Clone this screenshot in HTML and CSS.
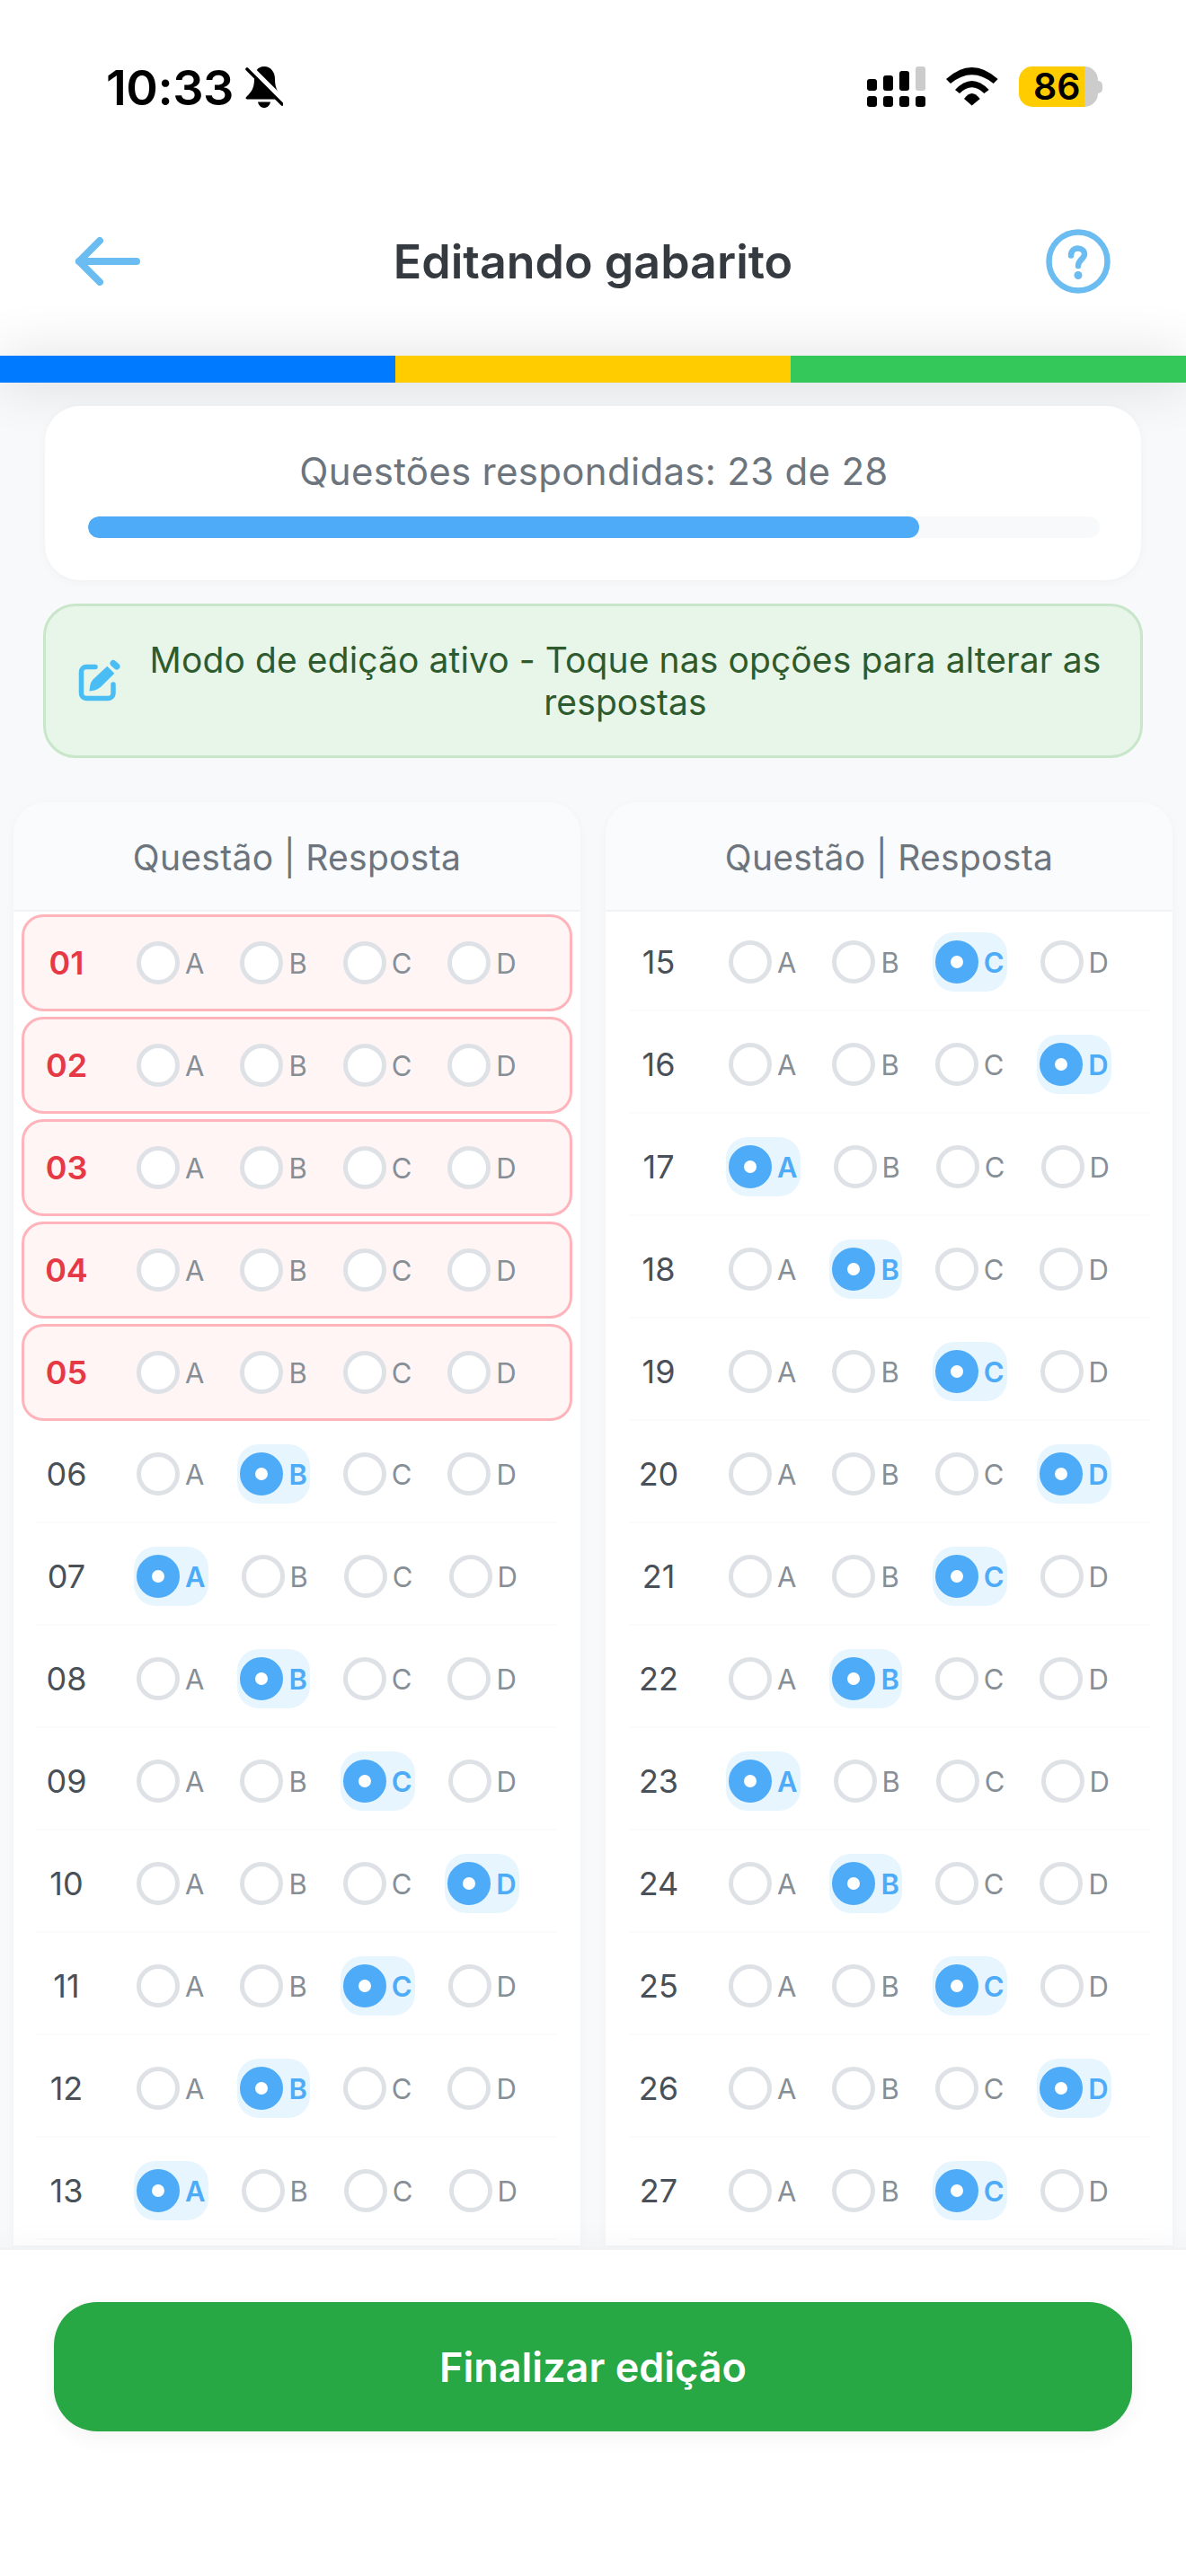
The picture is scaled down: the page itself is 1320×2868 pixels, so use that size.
FILE: index.html
```html
<!DOCTYPE html>
<html lang="pt-BR">
<head>
    <meta charset="UTF-8">
    <meta name="viewport" content="width=device-width, initial-scale=1.0">
    <title>Editando gabarito</title>
    <link rel="stylesheet" href="styles.css">
</head>
<body>

<div class="status">
    <div class="status-left">
        <span class="time">10:33</span>
        <svg class="bell" viewBox="0 0 42 46" width="42" height="46">
            <path fill="#000" d="M21 0C13 0 10 7 10 14C10 24 7 28 2 33C0 35 0 36 2 36.5H40C42 36 41 34 40 33C36 28 33 24 33 14C33 7 29 0 21 0Z"/>
            <path fill="#000" d="M14 39.5H28C27 44 24 46 21 46C18 46 15 44 14 39.5Z"/>
            <path stroke="#fff" stroke-width="8" d="M4 1L44 41"/>
            <path stroke="#000" stroke-width="3.6" stroke-linecap="round" d="M2 3L41 42"/>
        </svg>
    </div>
    <div class="status-right">
        <svg class="signal" viewBox="0 0 65 45" width="65" height="45">
            <rect x="54" y="0" width="11" height="27" rx="3" fill="#ccc"/>
            <rect x="36" y="5" width="11" height="22" rx="3"/>
            <rect x="18" y="10" width="11" height="17" rx="3"/>
            <rect x="0" y="14" width="11" height="13" rx="3"/>
            <rect x="0" y="33" width="11" height="12" rx="3"/>
            <rect x="18" y="33" width="11" height="12" rx="3"/>
            <rect x="36" y="33" width="11" height="12" rx="3"/>
            <rect x="54" y="33" width="11" height="12" rx="3"/>
        </svg>
        <svg class="wifi" viewBox="0 0 58 43" width="58" height="43">
            <path d="M0 13Q28.7 -13 57.6 13L52.7 18Q28.7 -1.500 5 18Z"/>
            <path d="M10 25Q28.7 5 47.7 25L42.3 29Q28.700 15.500 15 29Z"/>
            <path d="M20 35Q28.7 23 37.700 35L28.700 42.500Z"/>
        </svg>
        <div class="battery-wrap">
            <div class="battery">86</div>
            <div class="battery-nub"></div>
        </div>
    </div>
</div>

<div class="nav">
    <svg class="nav-icon" viewBox="0 0 72 54" width="72" height="54" fill="none" stroke="#6bbcf0" stroke-width="8" stroke-linecap="round" stroke-linejoin="round">
        <path d="M68 27H4"/>
        <path d="M27 4L4 27L27 50"/>
    </svg>
    <h1 class="nav-title">Editando gabarito</h1>
    <svg class="nav-icon" viewBox="0 0 72 72" width="72" height="72" fill="none" stroke="#6bbcf0" stroke-width="6.500" stroke-linecap="round">
        <circle cx="36" cy="36" r="32.500"/>
        <path d="M28 29.500C28 24.500 31.500 21.500 35.500 21.500C40 21.500 43 24.500 43 28C43 33 36 34 36 41"/>
        <circle cx="36" cy="51.500" r="4.500" fill="#6bbcf0" stroke="none"/>
    </svg>
</div>

<div class="color-bar">
    <div class="color-blue"></div>
    <div class="color-yellow"></div>
    <div class="color-green"></div>
</div>

<div class="content">
    <div class="progress-card">
        <div class="progress-label">Questões respondidas: 23 de 28</div>
        <div class="progress-track"><div class="progress-fill" style="width: 82.14%"></div></div>
    </div>

    <div class="edit-banner">
        <svg class="edit-icon" viewBox="0 0 48 48" width="48" height="48">
            <path fill="none" stroke="#4abdf5" stroke-width="5.500" stroke-linecap="round" d="M19 8.500H9A5.500 5.500 0 0 0 3.500 14V38A5.500 5.500 0 0 0 9 43.500H33.500A5.500 5.500 0 0 0 39 38V28"/>
            <path fill="#4abdf5" d="M12.500 35.500Q13 26 16.500 22.500L32.300 7.700L40.300 15.700L25 31Q20 35 12.500 35.500Z"/>
            <path stroke="#4abdf5" stroke-width="7" stroke-linecap="round" d="M39 4.500L43 8"/>
        </svg>
        <div class="edit-text">Modo de edição ativo - Toque nas opções para alterar as respostas</div>
    </div>

    <div class="columns">
        <div class="column">
            <div class="column-head">Questão | Resposta</div>
            <div class="row missing"><span class="num">01</span><div class="opts"><div class="opt"><span class="radio"></span>A</div><div class="opt"><span class="radio"></span>B</div><div class="opt"><span class="radio"></span>C</div><div class="opt"><span class="radio"></span>D</div></div></div>
            <div class="row missing"><span class="num">02</span><div class="opts"><div class="opt"><span class="radio"></span>A</div><div class="opt"><span class="radio"></span>B</div><div class="opt"><span class="radio"></span>C</div><div class="opt"><span class="radio"></span>D</div></div></div>
            <div class="row missing"><span class="num">03</span><div class="opts"><div class="opt"><span class="radio"></span>A</div><div class="opt"><span class="radio"></span>B</div><div class="opt"><span class="radio"></span>C</div><div class="opt"><span class="radio"></span>D</div></div></div>
            <div class="row missing"><span class="num">04</span><div class="opts"><div class="opt"><span class="radio"></span>A</div><div class="opt"><span class="radio"></span>B</div><div class="opt"><span class="radio"></span>C</div><div class="opt"><span class="radio"></span>D</div></div></div>
            <div class="row missing"><span class="num">05</span><div class="opts"><div class="opt"><span class="radio"></span>A</div><div class="opt"><span class="radio"></span>B</div><div class="opt"><span class="radio"></span>C</div><div class="opt"><span class="radio"></span>D</div></div></div>
            <div class="row"><span class="num">06</span><div class="opts"><div class="opt"><span class="radio"></span>A</div><div class="opt selected"><span class="radio"></span>B</div><div class="opt"><span class="radio"></span>C</div><div class="opt"><span class="radio"></span>D</div></div></div>
            <div class="row"><span class="num">07</span><div class="opts"><div class="opt selected"><span class="radio"></span>A</div><div class="opt"><span class="radio"></span>B</div><div class="opt"><span class="radio"></span>C</div><div class="opt"><span class="radio"></span>D</div></div></div>
            <div class="row"><span class="num">08</span><div class="opts"><div class="opt"><span class="radio"></span>A</div><div class="opt selected"><span class="radio"></span>B</div><div class="opt"><span class="radio"></span>C</div><div class="opt"><span class="radio"></span>D</div></div></div>
            <div class="row"><span class="num">09</span><div class="opts"><div class="opt"><span class="radio"></span>A</div><div class="opt"><span class="radio"></span>B</div><div class="opt selected"><span class="radio"></span>C</div><div class="opt"><span class="radio"></span>D</div></div></div>
            <div class="row"><span class="num">10</span><div class="opts"><div class="opt"><span class="radio"></span>A</div><div class="opt"><span class="radio"></span>B</div><div class="opt"><span class="radio"></span>C</div><div class="opt selected"><span class="radio"></span>D</div></div></div>
            <div class="row"><span class="num">11</span><div class="opts"><div class="opt"><span class="radio"></span>A</div><div class="opt"><span class="radio"></span>B</div><div class="opt selected"><span class="radio"></span>C</div><div class="opt"><span class="radio"></span>D</div></div></div>
            <div class="row"><span class="num">12</span><div class="opts"><div class="opt"><span class="radio"></span>A</div><div class="opt selected"><span class="radio"></span>B</div><div class="opt"><span class="radio"></span>C</div><div class="opt"><span class="radio"></span>D</div></div></div>
            <div class="row"><span class="num">13</span><div class="opts"><div class="opt selected"><span class="radio"></span>A</div><div class="opt"><span class="radio"></span>B</div><div class="opt"><span class="radio"></span>C</div><div class="opt"><span class="radio"></span>D</div></div></div>
        </div>

        <div class="column">
            <div class="column-head">Questão | Resposta</div>
            <div class="row"><span class="num">15</span><div class="opts"><div class="opt"><span class="radio"></span>A</div><div class="opt"><span class="radio"></span>B</div><div class="opt selected"><span class="radio"></span>C</div><div class="opt"><span class="radio"></span>D</div></div></div>
            <div class="row"><span class="num">16</span><div class="opts"><div class="opt"><span class="radio"></span>A</div><div class="opt"><span class="radio"></span>B</div><div class="opt"><span class="radio"></span>C</div><div class="opt selected"><span class="radio"></span>D</div></div></div>
            <div class="row"><span class="num">17</span><div class="opts"><div class="opt selected"><span class="radio"></span>A</div><div class="opt"><span class="radio"></span>B</div><div class="opt"><span class="radio"></span>C</div><div class="opt"><span class="radio"></span>D</div></div></div>
            <div class="row"><span class="num">18</span><div class="opts"><div class="opt"><span class="radio"></span>A</div><div class="opt selected"><span class="radio"></span>B</div><div class="opt"><span class="radio"></span>C</div><div class="opt"><span class="radio"></span>D</div></div></div>
            <div class="row"><span class="num">19</span><div class="opts"><div class="opt"><span class="radio"></span>A</div><div class="opt"><span class="radio"></span>B</div><div class="opt selected"><span class="radio"></span>C</div><div class="opt"><span class="radio"></span>D</div></div></div>
            <div class="row"><span class="num">20</span><div class="opts"><div class="opt"><span class="radio"></span>A</div><div class="opt"><span class="radio"></span>B</div><div class="opt"><span class="radio"></span>C</div><div class="opt selected"><span class="radio"></span>D</div></div></div>
            <div class="row"><span class="num">21</span><div class="opts"><div class="opt"><span class="radio"></span>A</div><div class="opt"><span class="radio"></span>B</div><div class="opt selected"><span class="radio"></span>C</div><div class="opt"><span class="radio"></span>D</div></div></div>
            <div class="row"><span class="num">22</span><div class="opts"><div class="opt"><span class="radio"></span>A</div><div class="opt selected"><span class="radio"></span>B</div><div class="opt"><span class="radio"></span>C</div><div class="opt"><span class="radio"></span>D</div></div></div>
            <div class="row"><span class="num">23</span><div class="opts"><div class="opt selected"><span class="radio"></span>A</div><div class="opt"><span class="radio"></span>B</div><div class="opt"><span class="radio"></span>C</div><div class="opt"><span class="radio"></span>D</div></div></div>
            <div class="row"><span class="num">24</span><div class="opts"><div class="opt"><span class="radio"></span>A</div><div class="opt selected"><span class="radio"></span>B</div><div class="opt"><span class="radio"></span>C</div><div class="opt"><span class="radio"></span>D</div></div></div>
            <div class="row"><span class="num">25</span><div class="opts"><div class="opt"><span class="radio"></span>A</div><div class="opt"><span class="radio"></span>B</div><div class="opt selected"><span class="radio"></span>C</div><div class="opt"><span class="radio"></span>D</div></div></div>
            <div class="row"><span class="num">26</span><div class="opts"><div class="opt"><span class="radio"></span>A</div><div class="opt"><span class="radio"></span>B</div><div class="opt"><span class="radio"></span>C</div><div class="opt selected"><span class="radio"></span>D</div></div></div>
            <div class="row"><span class="num">27</span><div class="opts"><div class="opt"><span class="radio"></span>A</div><div class="opt"><span class="radio"></span>B</div><div class="opt selected"><span class="radio"></span>C</div><div class="opt"><span class="radio"></span>D</div></div></div>
        </div>
    </div>
</div>

<div class="footer">
    <button class="finish-button">Finalizar edição</button>
</div>

</body>
</html>
```

FILE: styles.css
```css
* {
    box-sizing: border-box;
}
body {
    font-family: Inter, "Liberation Sans", sans-serif;
    background-color: #f8f9fa;
    margin: 0;
    height: 2868px;
    display: flex;
    flex-direction: column;
    overflow: hidden;
}

/* status bar */
.status {
    height: 186px;
    flex-shrink: 0;
    background: #fff;
    display: flex;
    justify-content: space-between;
    align-items: flex-start;
    padding: 74px 93px 0 118px;
}
.status-left {
    display: flex;
    align-items: center;
    gap: 13px;
    height: 46px;
}
.time {
    font-size: 54px;
    font-weight: 600;
    letter-spacing: -0.5px;
    color: #000;
}
.status-right {
    display: flex;
    align-items: flex-start;
    gap: 23px;
}
.wifi {
    margin-top: 1px;
}
.battery-wrap {
    display: flex;
    align-items: center;
}
.battery {
    width: 88px;
    height: 45px;
    border-radius: 15px;
    background: linear-gradient(to right, #ffcc00 83%, #cccccc 83%);
    font-size: 41px;
    font-weight: 600;
    line-height: 45px;
    color: #000;
    padding-left: 16px;
}
.battery-nub {
    width: 5px;
    height: 14px;
    background: #ccc;
    border-radius: 0 5px 5px 0;
}

/* nav */
.nav {
    height: 210px;
    flex-shrink: 0;
    background: #fff;
    display: flex;
    justify-content: space-between;
    align-items: center;
    padding: 0 84px;
}
.nav-title {
    margin: 0;
    font-size: 52px;
    font-weight: 600;
    color: #343a40;
}
.color-bar {
    height: 30px;
    flex-shrink: 0;
    display: flex;
    position: relative;
    z-index: 1;
    box-shadow: 0 0 60px rgba(0, 0, 0, 0.16);
}
.color-bar div {
    flex: 1;
}
.color-blue {
    background: #007aff;
}
.color-yellow {
    background: #ffcc00;
}
.color-green {
    background: #34c759;
}

/* content */
.content {
    flex: 1;
    min-height: 0;
    overflow: hidden;
    padding-top: 26px;
}
.progress-card {
    margin: 0 50px;
    height: 194px;
    background: #fff;
    border-radius: 39px;
    padding: 48px 46px 0 48px;
    position: relative;
    z-index: 2;
    box-shadow: 0 2px 12px rgba(0, 0, 0, 0.04);
}
.progress-label {
    font-size: 42px;
    letter-spacing: 0.3px;
    line-height: 50px;
    color: #6c757d;
    text-align: center;
    margin-bottom: 25px;
}
.progress-track {
    height: 24px;
    background: #f8f9fa;
    border-radius: 12px;
    overflow: hidden;
}
.progress-fill {
    height: 100%;
    background: #4dabf7;
    border-radius: 12px;
}
.edit-banner {
    margin: 26px 48px 0;
    padding: 36px;
    background: #e8f5e9;
    border: 3px solid #c8e6c9;
    border-radius: 36px;
    display: flex;
    align-items: center;
    gap: 24px;
}
.edit-icon {
    flex-shrink: 0;
}
.edit-text {
    flex: 1;
    font-size: 39px;
    letter-spacing: 0.1px;
    line-height: 47px;
    color: #2e5b2e;
    text-align: center;
}
.columns {
    display: flex;
    gap: 28px;
    padding: 0 15px;
    margin-top: 49px;
}
.column {
    flex: 1;
    background: #fff;
    border-radius: 36px 36px 0 0;
    box-shadow: 0 2px 12px rgba(0, 0, 0, 0.03);
    overflow: hidden;
}
.column-head {
    height: 122px;
    background: #fafbfc;
    border-bottom: 2px solid #f1f3f5;
    font-size: 39px;
    letter-spacing: 0.3px;
    color: #6c757d;
    text-align: center;
    line-height: 124px;
    margin-bottom: 3px;
}

/* rows */
.row {
    height: 108px;
    margin: 0 26px 6px;
    border-bottom: 2px solid #fbfbfc;
    display: flex;
    align-items: center;
}
.row.missing {
    margin: 0 9px 6px;
    padding: 0 14px;
    background: #fff5f5;
    border: 3px solid #ffb3ba;
    border-radius: 24px;
}
.num {
    width: 66px;
    flex-shrink: 0;
    text-align: center;
    font-size: 36px;
    color: #495057;
}
.row.missing .num {
    color: #e63946;
    font-weight: 600;
}
.opts {
    margin-left: 42px;
    display: flex;
    gap: 34px;
}
.opt {
    display: flex;
    align-items: center;
    gap: 6px;
    padding: 9px 3px;
    border-radius: 24px;
    font-size: 31px;
    color: #868e96;
}
.opt.selected {
    background: #e7f5ff;
    color: #4dabf7;
    font-weight: 600;
}
.radio {
    width: 48px;
    height: 48px;
    border: 5px solid #dee2e6;
    border-radius: 50%;
    background: #fff;
    flex-shrink: 0;
}
.opt.selected .radio {
    border: 17px solid #4dabf7;
}

/* footer */
.footer {
    height: 366px;
    flex-shrink: 0;
    background: #fff;
    border-top: 3px solid #f1f3f5;
    padding: 58px 60px 0;
    position: relative;
    z-index: 1;
    box-shadow: 0 -6px 30px rgba(0, 0, 0, 0.03);
}
.finish-button {
    display: block;
    width: 100%;
    height: 144px;
    border: none;
    border-radius: 48px;
    background-color: #28a745;
    color: #fff;
    font-family: inherit;
    font-size: 45px;
    font-weight: 600;
    box-shadow: 0 6px 24px rgba(0, 0, 0, 0.05);
}
```
